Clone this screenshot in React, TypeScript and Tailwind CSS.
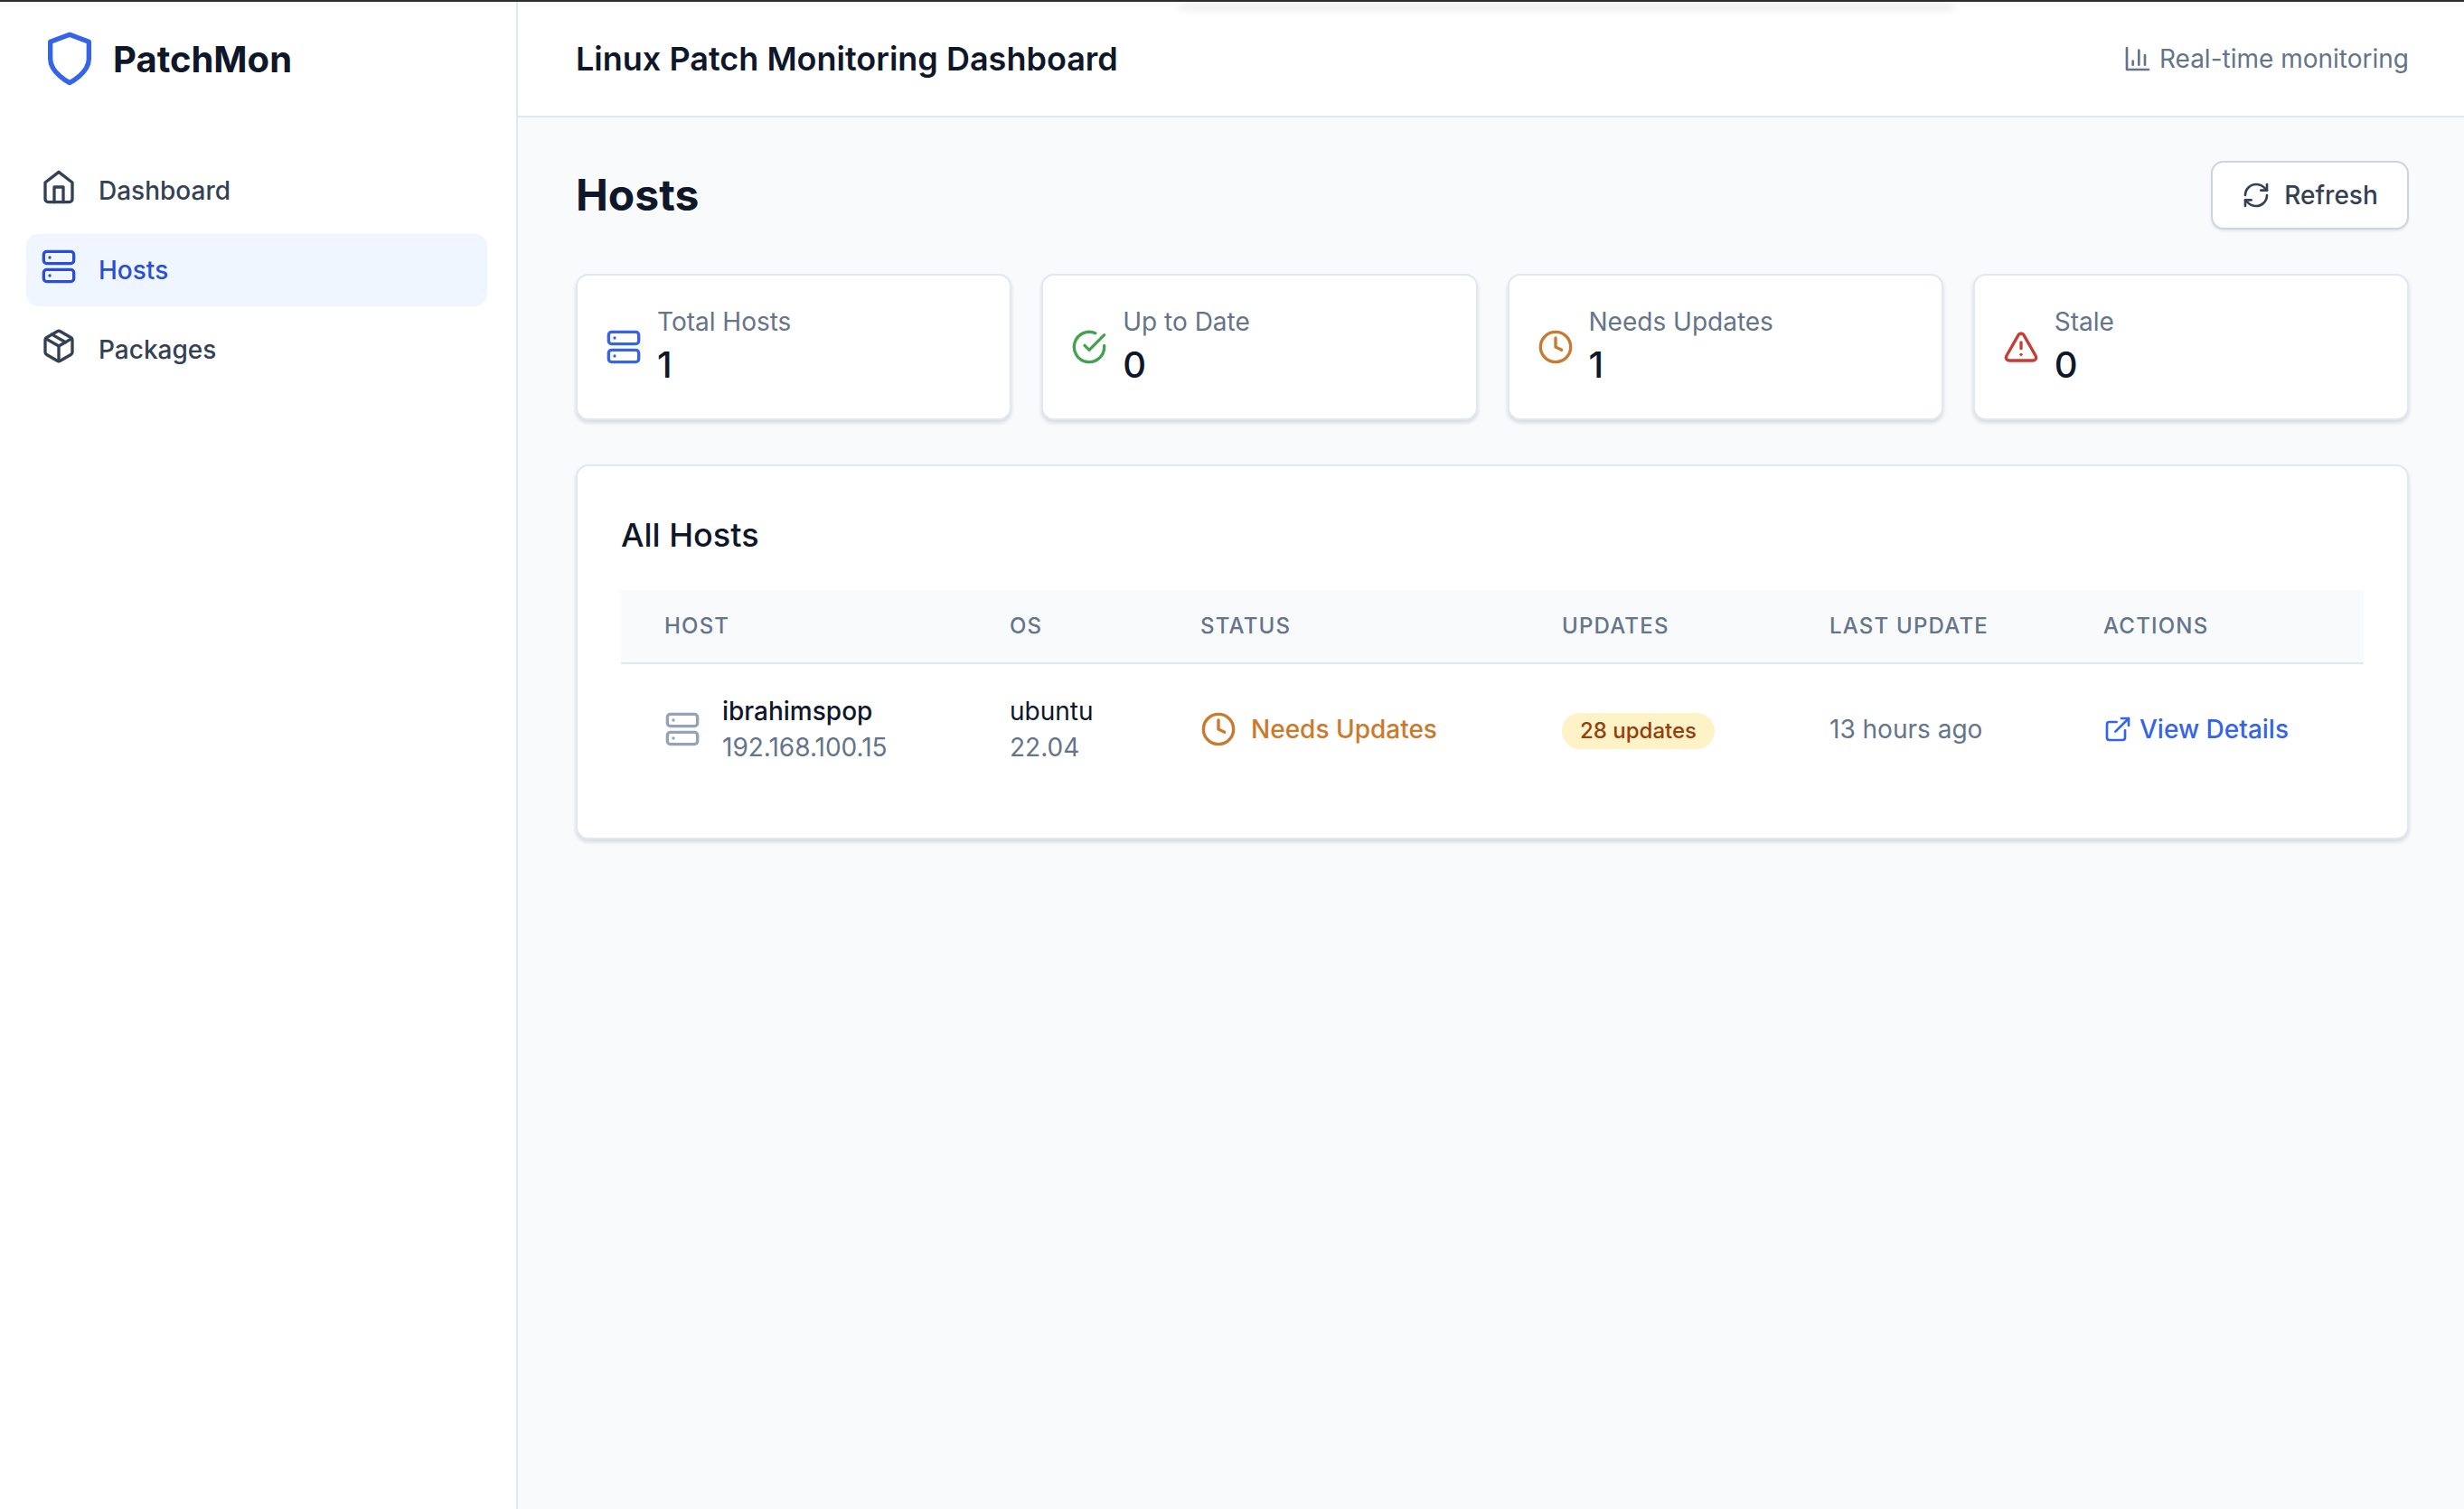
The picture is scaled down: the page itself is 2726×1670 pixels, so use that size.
import { Server, Clock, AlertTriangle, RefreshCw, ExternalLink } from "lucide-react";

const font = { fontFamily: "Inter, sans-serif" };

function HomeIcon() {
  return (
    <svg width="40" height="40" viewBox="0 0 24 24" fill="none" stroke="currentColor" strokeWidth="2" strokeLinecap="round" strokeLinejoin="round">
      <path d="m3 9 9-7 9 7v11a2 2 0 0 1-2 2H5a2 2 0 0 1-2-2z" />
      <polyline points="9 22 9 12 15 12 15 22" />
    </svg>
  );
}

function PackageIcon() {
  return (
    <svg width="40" height="40" viewBox="0 0 24 24" fill="none" stroke="currentColor" strokeWidth="2" strokeLinecap="round" strokeLinejoin="round">
      <path d="m7.5 4.27 9 5.15" />
      <path d="M21 8a2 2 0 0 0-1-1.73l-7-4a2 2 0 0 0-2 0l-7 4A2 2 0 0 0 3 8v8a2 2 0 0 0 1 1.73l7 4a2 2 0 0 0 2 0l7-4A2 2 0 0 0 21 16Z" />
      <path d="m3.3 7 8.7 5 8.7-5" />
      <path d="M12 22V12" />
    </svg>
  );
}

function CheckIcon({ className }: { className?: string }) {
  return (
    <svg className={className} width="40" height="40" viewBox="0 0 24 24" fill="none" stroke="currentColor" strokeWidth="2" strokeLinecap="round" strokeLinejoin="round">
      <path d="M22 11.08V12a10 10 0 1 1-5.93-9.14" />
      <path d="m9 11 3 3L22 4" />
    </svg>
  );
}

function ChartIcon() {
  return (
    <svg width="32" height="32" viewBox="0 0 24 24" fill="none" stroke="currentColor" strokeWidth="2" strokeLinecap="round" strokeLinejoin="round">
      <path d="M3 3v18h18" />
      <path d="M18 17V9" />
      <path d="M13 17V5" />
      <path d="M8 17v-3" />
    </svg>
  );
}

function Stat({ icon, label, value }: { icon: React.ReactNode; label: string; value: string }) {
  return (
    <div className="flex h-[162px] items-center rounded-[14px] border-2 border-[#e2e8f0] bg-white pl-[31px] shadow-[0_3px_4px_rgba(15,23,42,0.14)]">
      {icon}
      <div className="ml-[17px] flex flex-col gap-[3px]">
        <span className="text-[28px] leading-[37px] text-[#64748b]">{label}</span>
        <span className="text-[40px] leading-[52px] font-medium text-[#0f172a]">{value}</span>
      </div>
    </div>
  );
}

function NavItem({ icon, label, active }: { icon: React.ReactNode; label: string; active?: boolean }) {
  return (
    <div className={`flex h-[80px] items-center gap-[24px] rounded-[14px] pl-[16px] text-[28px] font-medium ${active ? "bg-[#eff6ff] text-[#2b4fd4]" : "text-[#334155]"}`}>
      <span className="mb-[8px] flex">{icon}</span>
      <span>{label}</span>
    </div>
  );
}

export default function App() {
  return (
    <div style={font} className="relative flex h-[1670px] w-[2726px] flex-col overflow-hidden bg-white">
      <div className="h-[2px] shrink-0 bg-[#2c2c30]" />
      <div className="absolute left-[1305px] top-0 z-10 h-[2px] w-[856px] bg-[#2c2c30] shadow-[0_6px_10px_rgba(0,0,0,0.3)]" />
      <div className="flex min-h-0 flex-1">
        <aside className="w-[573px] shrink-0 border-r-2 border-[#e2e8f0] bg-white">
          <div className="flex h-[126px] items-center pl-[45px]">
            <svg width="64" height="64" viewBox="0 0 24 24" fill="none" stroke="#3563e9" strokeWidth="2" strokeLinejoin="round" strokeLinecap="round">
              <path d="M12 22s8-4 8-10V5l-8-3-8 3v7c0 6 8 10 8 10z" />
            </svg>
            <span className="ml-[16px] mt-[2px] text-[40px] font-bold text-[#0f172a]">PatchMon</span>
          </div>
          <nav className="mt-[43px] flex flex-col gap-[8px] pl-[29px] pr-[32px]">
            <NavItem icon={<HomeIcon />} label="Dashboard" />
            <NavItem active icon={<Server size={40} strokeWidth={2} />} label="Hosts" />
            <NavItem icon={<PackageIcon />} label="Packages" />
          </nav>
        </aside>
        <div className="flex min-w-0 flex-1 flex-col bg-[#f8fafc]">
          <header className="flex h-[128px] shrink-0 items-center justify-between border-b-2 border-[#e2e8f0] bg-white pl-[64px] pr-[61px]">
            <h1 className="text-[36px] font-semibold text-[#0f172a]">Linux Patch Monitoring Dashboard</h1>
            <div className="flex items-center gap-[8px] text-[28px] text-[#64748b]">
              <ChartIcon />
              <span>Real-time monitoring</span>
            </div>
          </header>
          <main className="flex flex-col pl-[64px] pr-[61px] pt-[48px]">
            <div className="flex items-center justify-between">
              <h2 className="text-[48px] font-bold text-[#0f172a]">Hosts</h2>
              <button className="flex h-[76px] w-[219px] items-center justify-center gap-[15px] rounded-[14px] border-2 border-[#cbd5e1] bg-white text-[28px] font-medium text-[#334155] shadow-[0_2px_3px_rgba(15,23,42,0.08)]">
                <RefreshCw size={32} />
                Refresh
              </button>
            </div>
            <div className="mt-[49px] grid grid-cols-4 gap-[33px]">
              <Stat icon={<Server size={40} className="text-[#3563e9]" />} label="Total Hosts" value="1" />
              <Stat icon={<CheckIcon className="text-[#43a24f]" />} label="Up to Date" value="0" />
              <Stat icon={<Clock size={40} className="text-[#ca7a2c]" />} label="Needs Updates" value="1" />
              <Stat icon={<AlertTriangle size={40} className="text-[#cc3b33]" />} label="Stale" value="0" />
            </div>
            <section className="mt-[49px] rounded-[14px] border-2 border-[#e2e8f0] bg-white px-[48px] pb-[48px] pt-[50px] shadow-[0_3px_4px_rgba(15,23,42,0.14)]">
              <h3 className="text-[36px] font-medium leading-[52px] text-[#0f172a]">All Hosts</h3>
              <table className="mt-[35px] w-full table-fixed border-collapse text-left">
                <thead>
                  <tr className="h-[81px] border-b-2 border-[#e2e8f0] bg-[#f8fafc] text-[24px] tracking-wider text-[#64748b]">
                    <th className="w-[382px] pl-[48px] font-medium">HOST</th>
                    <th className="w-[211px] pl-[48px] font-medium">OS</th>
                    <th className="w-[400px] pl-[48px] font-medium">STATUS</th>
                    <th className="w-[296px] pl-[48px] font-medium">UPDATES</th>
                    <th className="w-[303px] pl-[48px] font-medium">LAST UPDATE</th>
                    <th className="pl-[48px] font-medium">ACTIONS</th>
                  </tr>
                </thead>
                <tbody className="text-[28px]">
                  <tr className="h-[145px]">
                    <td className="pl-[48px]">
                      <div className="flex items-center gap-[24px]">
                        <Server size={40} className="text-[#94a3b8]" />
                        <div className="flex flex-col leading-[40px]">
                          <span className="font-medium text-[#0f172a]">ibrahimspop</span>
                          <span className="text-[#64748b]">192.168.100.15</span>
                        </div>
                      </div>
                    </td>
                    <td className="pl-[48px]">
                      <div className="flex flex-col leading-[40px]">
                        <span className="text-[#0f172a]">ubuntu</span>
                        <span className="text-[#64748b]">22.04</span>
                      </div>
                    </td>
                    <td className="pl-[48px]">
                      <div className="flex items-center gap-[16px] font-medium text-[#ca7a2c]">
                        <Clock size={40} />
                        Needs Updates
                      </div>
                    </td>
                    <td className="pl-[48px]">
                      <span className="inline-flex h-[40px] items-center rounded-full bg-[#fef3c7] px-[20px] text-[24px] font-medium text-[#92400e]">28 updates</span>
                    </td>
                    <td className="pl-[48px] text-[#64748b]">13 hours ago</td>
                    <td className="pl-[48px]">
                      <div className="flex items-center gap-[8px] font-medium text-[#3563e9]">
                        <ExternalLink size={32} />
                        View Details
                      </div>
                    </td>
                  </tr>
                </tbody>
              </table>
            </section>
          </main>
        </div>
      </div>
    </div>
  );
}
